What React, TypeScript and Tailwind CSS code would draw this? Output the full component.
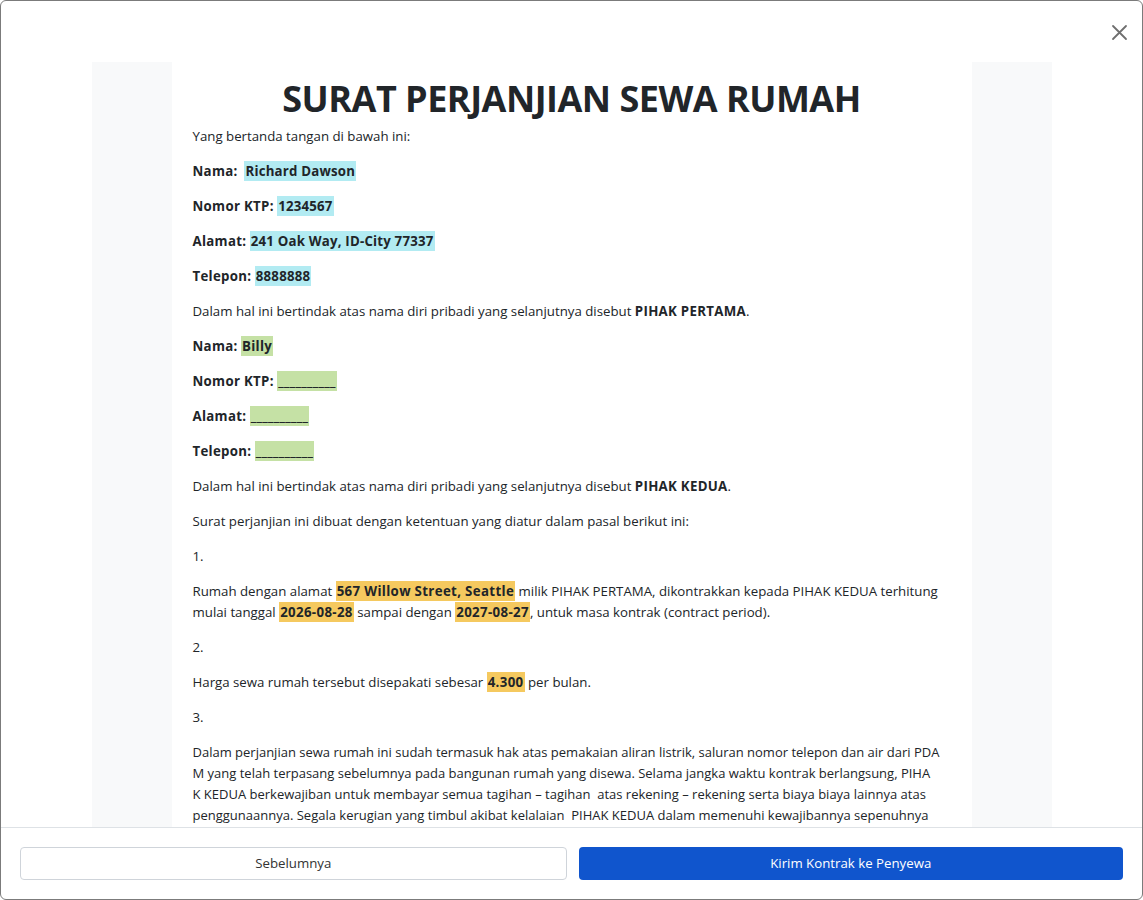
import React from 'react';

const cyan = 'bg-[#b2ebf2] font-bold tracking-[0.2px] px-[1px] py-[1px]';
const green = 'bg-[#c5e1a5] font-bold tracking-[0.3px] px-[1px] py-[1px]';
const amber = 'bg-[#f5c95f] font-bold tracking-[0.35px] px-[1px] py-[1px]';
const blank = '__________';

function Field({ label, value, tone }: { label: string; value: string; tone: string }) {
  return (
    <p className="mb-[14px]">
      <span className="font-bold tracking-[0.3px]">{label}</span> <span className={tone}>{value}</span>
    </p>
  );
}

export default function App() {
  return (
    <div
      className="w-[1143px] h-[900px] bg-white border border-[#7b7b7b] rounded-[6px] flex flex-col overflow-hidden text-[#212529] relative"
      style={{ fontFamily: '"Open Sans", "Noto Sans", sans-serif' }}
    >
      <button className="absolute top-[23px] right-[14px] w-[17px] h-[17px] flex items-center justify-center text-[#6f6f6f]">
        <svg width="17" height="17" viewBox="0 0 17 17" fill="none" stroke="currentColor" strokeWidth="1.8" strokeLinecap="round">
          <path d="M2 2L15 15M15 2L2 15" />
        </svg>
      </button>

      <div className="flex-1 overflow-hidden pt-[61px]">
        <div className="w-[960px] mx-auto bg-[#f8f9fa] px-[80px] h-full">
          <div className="bg-white h-full px-[21px] pt-[14px] text-[13.25px] leading-[21px]">
            <h1 className="text-center font-bold text-[36px] tracking-[-0.5px] leading-[46px] mb-[4px] text-[#212529]">
              SURAT PERJANJIAN SEWA RUMAH
            </h1>
            <p className="mb-[14px]">Yang bertanda tangan di bawah ini:</p>
            <p className="mb-[14px]">
              <span className="font-bold tracking-[0.3px]">Nama:</span>&nbsp; <span className={cyan}>Richard Dawson</span>
            </p>
            <Field label="Nomor KTP:" value="1234567" tone={cyan} />
            <Field label="Alamat:" value="241 Oak Way, ID-City 77337" tone={cyan} />
            <Field label="Telepon:" value="8888888" tone={cyan} />
            <p className="mb-[14px]">
              Dalam hal ini bertindak atas nama diri pribadi yang selanjutnya disebut{' '}
              <span className="font-bold tracking-[0.3px]">PIHAK PERTAMA</span>.
            </p>
            <Field label="Nama:" value="Billy" tone={green} />
            <Field label="Nomor KTP:" value={blank} tone={green} />
            <Field label="Alamat:" value={blank} tone={green} />
            <Field label="Telepon:" value={blank} tone={green} />
            <p className="mb-[14px]">
              Dalam hal ini bertindak atas nama diri pribadi yang selanjutnya disebut{' '}
              <span className="font-bold tracking-[0.3px]">PIHAK KEDUA</span>.
            </p>
            <p className="mb-[14px]">Surat perjanjian ini dibuat dengan ketentuan yang diatur dalam pasal berikut ini:</p>
            <p className="mb-[14px]">1.</p>
            <p className="mb-[14px]">
              Rumah dengan alamat <span className={amber}>567 Willow Street, Seattle</span> milik PIHAK PERTAMA, dikontrakkan kepada PIHAK KEDUA terhitung mulai tanggal{' '}
              <span className={amber}>2026-08-28</span> sampai dengan <span className={amber}>2027-08-27</span>, untuk masa kontrak (contract period).
            </p>
            <p className="mb-[14px]">2.</p>
            <p className="mb-[14px]">
              Harga sewa rumah tersebut disepakati sebesar <span className={amber}>4.300</span> per bulan.
            </p>
            <p className="mb-[14px]">3.</p>
            <p className="mb-[14px] text-[13px] whitespace-nowrap">
              Dalam perjanjian sewa rumah ini sudah termasuk hak atas pemakaian aliran listrik, saluran nomor telepon dan air dari PDA
              <br />
              M yang telah terpasang sebelumnya pada bangunan rumah yang disewa. Selama jangka waktu kontrak berlangsung, PIHA
              <br />
              K KEDUA berkewajiban untuk membayar semua tagihan – tagihan&nbsp; atas rekening – rekening serta biaya biaya lainnya atas
              <br />
              penggunaannya. Segala kerugian yang timbul akibat kelalaian&nbsp; PIHAK KEDUA dalam memenuhi kewajibannya sepenuhnya
              <br />
              menjadi tanggung jawab PIHAK KEDUA.
            </p>
            <p className="mb-[14px]">4.</p>
          </div>
        </div>
      </div>

      <div className="border-t border-[#dee2e6] px-[19px] pt-[19px] pb-[19px] flex gap-[12px]">
        <button className="flex-1 h-[33px] rounded-[4px] border border-[#cfd4da] bg-white text-[13.25px] text-[#333]">
          Sebelumnya
        </button>
        <button className="flex-1 h-[33px] rounded-[4px] bg-[#1055cd] text-white text-[13.25px]">
          Kirim Kontrak ke Penyewa
        </button>
      </div>
    </div>
  );
}
